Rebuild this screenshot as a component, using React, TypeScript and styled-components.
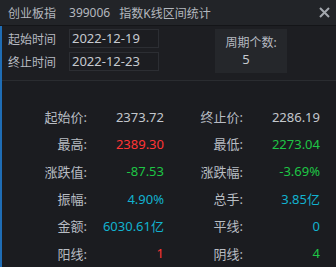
import React from "react";
import styled, { createGlobalStyle } from "styled-components";

const Global = createGlobalStyle`
  html, body { margin: 0; padding: 0; background: #1b1c20; }
  body { font-family: "Noto Sans", "Noto Sans CJK SC", sans-serif; }
`;

const Window = styled.div`
  width: 336px;
  height: 267px;
  background: #1b1c20;
  display: flex;
  flex-direction: column;
  overflow: hidden;
`;

const Header = styled.div`
  height: 25px;
  flex: none;
  background: #222428;
  border-bottom: 1px solid #141518;
  display: flex;
  align-items: center;
  justify-content: space-between;
  padding: 0 6px 0 8px;
  color: #b4b8bf;
  font-size: 12px;
`;

const Title = styled.div`
  display: flex;
  align-items: center;
`;

const TitlePart = styled.span<{ $gap?: number }>`
  margin-left: ${(p) => p.$gap ?? 0}px;
  white-space: nowrap;
`;

const CloseBtn = styled.div`
  width: 12px;
  height: 12px;
  display: flex;
  align-items: center;
  justify-content: center;
`;

const Body = styled.div`
  flex: 1;
  border-left: 2px solid #1f6db5;
  display: flex;
  flex-direction: column;
`;

const TopSection = styled.div`
  height: 51px;
  flex: none;
  border-bottom: 1px solid #2a2c30;
  background: #1d1e22;
  display: flex;
  padding: 3px 0 0 6px;
  box-sizing: content-box;
`;

const DateColumn = styled.div`
  display: flex;
  flex-direction: column;
  gap: 4px;
`;

const DateRow = styled.div`
  display: flex;
  align-items: center;
  height: 19px;
`;

const FieldLabel = styled.span`
  width: 61px;
  color: #b6bac1;
  font-size: 12px;
`;

const DateInput = styled.div`
  width: 86px;
  height: 17px;
  border: 1px solid #2c2e33;
  background: #1c1d21;
  color: #c6cad0;
  font-size: 13px;
  line-height: 17px;
  padding-left: 2px;
  box-sizing: content-box;
`;

const PeriodBox = styled.div`
  margin: 0 0 0 56px;
  width: 72px;
  height: 44px;
  background: #25272b;
  display: flex;
  flex-direction: column;
  align-items: center;
  justify-content: center;
  color: #b6bac1;
  font-size: 12px;
  line-height: 16px;
`;

const PeriodValue = styled.span`
  margin-right: 10px;
  color: #c6cad0;
  font-size: 13px;
`;

const StatsGrid = styled.div`
  display: grid;
  grid-template-columns: 85px 77px 79px 77px;
  grid-auto-rows: 27.3px;
  padding-top: 22px;
  align-items: center;
`;

const StatLabel = styled.div`
  text-align: right;
  color: #b8bcc3;
  font-size: 13px;
  white-space: nowrap;
`;

const StatValue = styled.div<{ $color: string }>`
  text-align: right;
  color: ${(p) => p.$color};
  font-size: 13px;
  white-space: nowrap;
`;

const C = {
  white: "#c3c7cd",
  red: "#ff3434",
  green: "#1ec545",
  cyan: "#12b2cf",
};

const stats: [string, string, string, string, string, string][] = [
  ["起始价:", "2373.72", C.white, "终止价:", "2286.19", C.white],
  ["最高:", "2389.30", C.red, "最低:", "2273.04", C.green],
  ["涨跌值:", "-87.53", C.green, "涨跌幅:", "-3.69%", C.green],
  ["振幅:", "4.90%", C.cyan, "总手:", "3.85亿", C.cyan],
  ["金额:", "6030.61亿", C.cyan, "平线:", "0", C.cyan],
  ["阳线:", "1", C.red, "阴线:", "4", C.green],
];

export default function App() {
  return (
    <>
      <Global />
      <Window>
        <Header>
          <Title>
            <TitlePart>创业板指</TitlePart>
            <TitlePart $gap={13}>399006</TitlePart>
            <TitlePart $gap={9}>指数K线区间统计</TitlePart>
          </Title>
          <CloseBtn>
            <svg width="11" height="11" viewBox="0 0 11 11">
              <path d="M1 1 L10 10 M10 1 L1 10" stroke="#a3a7ad" strokeWidth="2" />
            </svg>
          </CloseBtn>
        </Header>
        <Body>
          <TopSection>
            <DateColumn>
              <DateRow>
                <FieldLabel>起始时间</FieldLabel>
                <DateInput>2022-12-19</DateInput>
              </DateRow>
              <DateRow>
                <FieldLabel>终止时间</FieldLabel>
                <DateInput>2022-12-23</DateInput>
              </DateRow>
            </DateColumn>
            <PeriodBox>
              <span>周期个数:</span>
              <PeriodValue>5</PeriodValue>
            </PeriodBox>
          </TopSection>
          <StatsGrid>
            {stats.map(([l1, v1, c1, l2, v2, c2]) => (
              <React.Fragment key={l1}>
                <StatLabel>{l1}</StatLabel>
                <StatValue $color={c1}>{v1}</StatValue>
                <StatLabel>{l2}</StatLabel>
                <StatValue $color={c2}>{v2}</StatValue>
              </React.Fragment>
            ))}
          </StatsGrid>
        </Body>
      </Window>
    </>
  );
}
